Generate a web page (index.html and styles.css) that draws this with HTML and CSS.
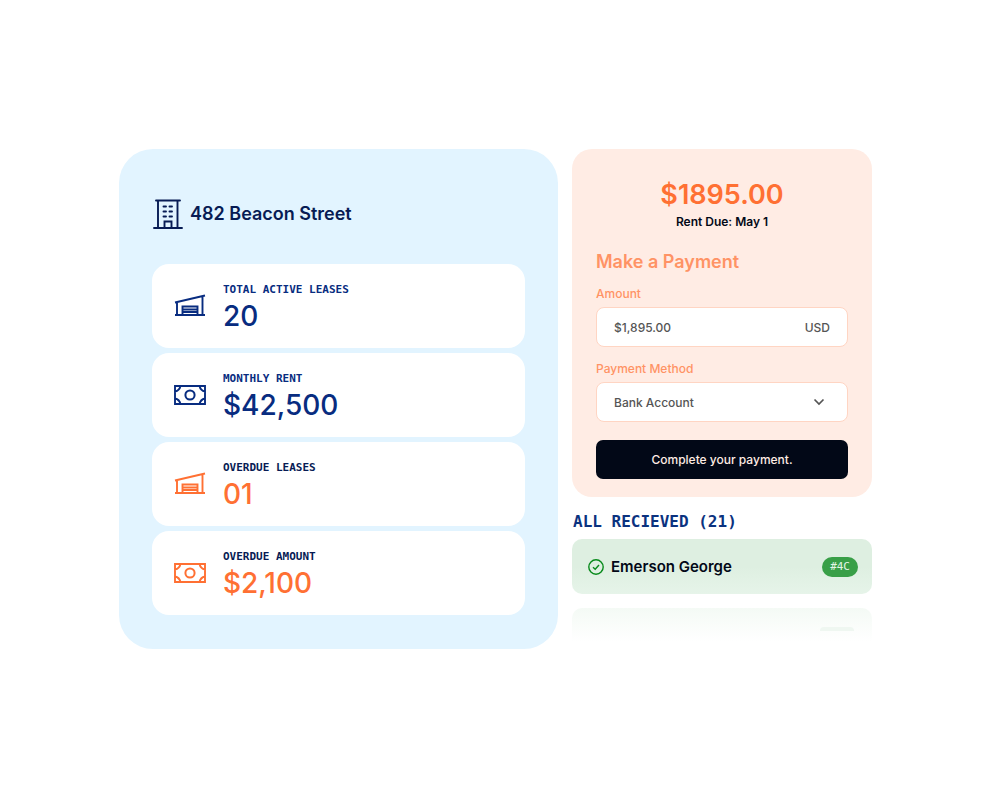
FILE: index.html
```html
<!DOCTYPE html>
<html lang="en">
<head>
<meta charset="utf-8">
<meta name="viewport" content="width=device-width, initial-scale=1">
<title>482 Beacon Street</title>
<link rel="stylesheet" href="styles.css">
</head>
<body>
<svg class="sprite" width="0" height="0" aria-hidden="true">
  <symbol id="garage" viewBox="0 0 32 24">
    <path d="M1 21H31M1 8.500L31 1.500M3 8V21M28.500 2V21M8.500 21V12.500H23.500V21M8.500 15.500H23.500M8.500 18H23.500" fill="none" stroke="currentColor" stroke-width="1.900"/>
  </symbol>
  <symbol id="cash" viewBox="0 0 32 20">
    <path d="M1 1H31V19H1ZM1 6.500Q5.500 5.500 6.500 1M25.500 1Q26.500 5.500 31 6.500M31 13.500Q26.500 14.500 25.500 19M6.500 19Q5.500 14.500 1 13.500" fill="none" stroke="currentColor" stroke-width="1.900"/>
    <circle cx="16" cy="10" r="4.600" fill="none" stroke="currentColor" stroke-width="2"/>
  </symbol>
</svg>
<main class="page">
  <section class="property">
    <header class="property-head">
      <svg class="building" viewBox="0 0 30 32" aria-hidden="true">
        <path d="M3 2.500H27M1 30H29M5 2.500V30M24.500 2.500V30M11.500 30V23.500H18.500V30M10.500 8.500H13M16.500 8.500H19M10.500 13.500H13M16.500 13.500H19M10.500 18.500H13M16.500 18.500H19" fill="none" stroke="currentColor" stroke-width="1.900" stroke-linecap="round"/>
      </svg>
      <h1 class="property-name">482 Beacon Street</h1>
    </header>
    <div class="stats">
      <article class="stat">
        <svg class="stat-icon" aria-hidden="true"><use href="#garage"/></svg>
        <div><h2 class="stat-label">TOTAL ACTIVE LEASES</h2><p class="stat-value">20</p></div>
      </article>
      <article class="stat">
        <svg class="stat-icon" aria-hidden="true"><use href="#cash"/></svg>
        <div><h2 class="stat-label">MONTHLY RENT</h2><p class="stat-value">$42,500</p></div>
      </article>
      <article class="stat overdue">
        <svg class="stat-icon" aria-hidden="true"><use href="#garage"/></svg>
        <div><h2 class="stat-label">OVERDUE LEASES</h2><p class="stat-value">01</p></div>
      </article>
      <article class="stat overdue">
        <svg class="stat-icon" aria-hidden="true"><use href="#cash"/></svg>
        <div><h2 class="stat-label">OVERDUE AMOUNT</h2><p class="stat-value">$2,100</p></div>
      </article>
    </div>
  </section>
  <div class="side">
    <form class="payment">
      <p class="due-amount">$1895.00</p>
      <p class="due-date">Rent Due: May 1</p>
      <h2 class="payment-title">Make a Payment</h2>
      <label class="field-label" for="amount">Amount</label>
      <div class="field">
        <input class="control" id="amount" type="text" value="$1,895.00">
        <span class="currency">USD</span>
      </div>
      <label class="field-label" for="method">Payment Method</label>
      <div class="field">
        <select class="control" id="method"><option>Bank Account</option></select>
        <svg class="chevron" viewBox="0 0 12 8" aria-hidden="true"><path d="M1.500 1.500L6 6L10.500 1.500" fill="none" stroke="currentColor" stroke-width="1.700"/></svg>
      </div>
      <button class="submit" type="button">Complete your payment.</button>
    </form>
    <h2 class="received-title">ALL RECIEVED (21)</h2>
    <ul class="received">
      <li class="tenant">
        <svg class="check" viewBox="0 0 16 16" aria-hidden="true"><circle cx="8" cy="8" r="7.200"/><path d="M5 8.300L7.200 10.300L11 6"/></svg>
        <span class="tenant-name">Emerson George</span>
        <span class="unit">#4C</span>
      </li>
      <li class="tenant next"><span class="unit-hint"></span></li>
    </ul>
  </div>
</main>
</body>
</html>
```

FILE: styles.css
```css
* { box-sizing: border-box; }
body {
  margin: 0;
  background: #fff;
  color: #020817;
  font-family: Inter, "Liberation Sans", sans-serif;
}
h1, h2, p, ul { margin: 0; padding: 0; }
.sprite { position: absolute; }
.page {
  display: grid;
  grid-template-columns: minmax(0, 439fr) minmax(0, 300fr);
  gap: 14px;
  align-items: start;
  padding: 149px 128px 24px 119px;
}
.property {
  padding: 49px 33px 34px;
  border-radius: 34px;
  background: #e2f4ff;
}
.property-head {
  display: flex;
  align-items: center;
  gap: 7px;
  margin-bottom: 34px;
  padding-left: 1px;
  color: #071b54;
}
.building { width: 30px; height: 32px; }
.property-name { font-size: 18px; line-height: 32px; font-weight: 600; }
.stats { display: grid; gap: 5px; }
.stat {
  display: flex;
  align-items: center;
  gap: 17px;
  padding: 18px 22px 14px;
  border-radius: 17px;
  background: #fff;
  color: #082c80;
}
.stat-icon { width: 32px; height: 24px; margin-bottom: 4px; }
.stat-label {
  font: 700 11px/16px "DejaVu Sans Mono", monospace;
}
.stat-value { font-size: 28px; line-height: 36px; font-weight: 500; }
.overdue { color: #ff7033; }
.overdue .stat-label { color: #071b54; }
.payment {
  padding: 28px 24px 18px;
  border-radius: 20px;
  background: #ffece4;
}
.due-amount {
  color: #ff7033;
  font-size: 27px;
  line-height: 36px;
  font-weight: 600;
  text-align: center;
}
.due-date {
  font-size: 12px;
  line-height: 18px;
  font-weight: 600;
  text-align: center;
}
.payment-title {
  margin: 18px 0 11px;
  color: #ff9365;
  font-size: 18px;
  line-height: 26px;
  font-weight: 600;
}
.field-label {
  display: block;
  margin-bottom: 5px;
  color: #ff9365;
  font-size: 12px;
  line-height: 16px;
  font-weight: 500;
}
.field {
  position: relative;
  display: flex;
  align-items: center;
  height: 40px;
  margin-bottom: 14px;
  border: 1px solid #ffd5c3;
  border-radius: 8px;
  background: #fff;
  color: #555;
  font-size: 12px;
  font-weight: 500;
}
.control {
  flex: 1;
  min-width: 0;
  height: 100%;
  padding: 0 17px;
  border: 0;
  border-radius: 8px;
  appearance: none;
  background: transparent;
  color: inherit;
  font: inherit;
}
.currency { padding-right: 17px; }
.chevron {
  position: absolute;
  right: 22px;
  width: 12px;
  height: 8px;
  pointer-events: none;
}
.submit {
  display: block;
  width: 100%;
  height: 39px;
  margin-top: 18px;
  border: 0;
  border-radius: 7px;
  background: #020817;
  color: #ffece4;
  font: 500 12px/16px Inter, "Liberation Sans", sans-serif;
}
.received-title {
  margin: 14px 0 6px 1px;
  color: #0b327f;
  font: 700 16px/22px "DejaVu Sans Mono", monospace;
}
.received {
  display: grid;
  gap: 14px;
  list-style: none;
}
.tenant {
  display: flex;
  align-items: center;
  gap: 7px;
  height: 55px;
  padding: 0 14px 0 16px;
  border-radius: 10px;
  background: linear-gradient(#deefe1 50%, #e6f4e9);
}
.check {
  width: 16px;
  height: 16px;
  fill: none;
  stroke: #078a1b;
  stroke-width: 1.4;
}
.tenant-name { flex: 1; font-size: 15px; font-weight: 600; }
.unit {
  padding: 0 8px;
  border-radius: 10px;
  background: #389f47;
  color: #e3f5e5;
  font: 400 11px/20px "DejaVu Sans Mono", monospace;
}
.next {
  align-items: flex-start;
  height: 42px;
  background: linear-gradient(#f4faf5, #fff 80%);
}
.unit-hint {
  width: 34px;
  height: 4px;
  margin: 19px 4px 0 auto;
  border-radius: 4px 4px 0 0;
  background: #eff7f1;
}
```
